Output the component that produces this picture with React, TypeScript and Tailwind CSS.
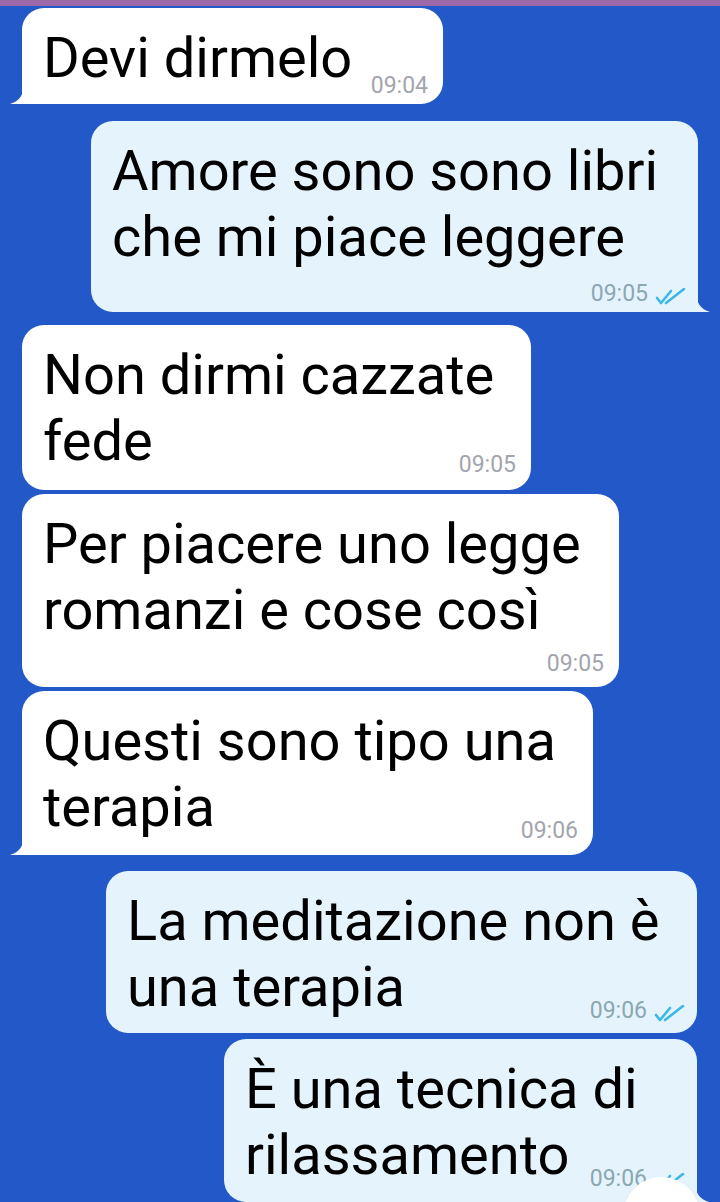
import React from "react";

type BubbleProps = {
  out?: boolean;
  lines: string[];
  time: string;
  tail?: boolean;
  timeRow?: boolean;
  metaClass?: string;
  className?: string;
};

function Checks() {
  return (
    <svg viewBox="0 0 34 17" className="h-[17px] w-[34px]" fill="none" stroke="#3cb8e8" strokeWidth="2.6" strokeLinecap="round" strokeLinejoin="round">
      <path d="M3 10 L7 15 L17 3" />
      <path d="M12 15 L30 1" />
    </svg>
  );
}

function Meta({ out, time }: { out?: boolean; time: string }) {
  return (
    <div className="flex shrink-0 items-end gap-[6px]">
      <span className={"text-[23px] leading-none " + (out ? "text-[#8ba7b3]" : "text-[#a3a5ad]")}>{time}</span>
      {out && <Checks />}
    </div>
  );
}

function Bubble({ out, lines, time, tail, timeRow, metaClass = "mb-[-2px]", className = "" }: BubbleProps) {
  const head = lines.slice(0, -1);
  const last = lines[lines.length - 1];
  const base = out ? "bg-[#e5f4fc] pl-[21px] pr-[10px]" : "bg-white pl-[21px] pr-[15px]";
  const corner = tail ? (out ? "rounded-br-none" : "rounded-bl-none") : "";
  return (
    <div className={`relative rounded-[22px] pt-[17px] text-[56px] leading-[66px] text-black ${base} ${corner} ${className}`}>
      {head.map((l) => (
        <div key={l} className="whitespace-nowrap">{l}</div>
      ))}
      {timeRow ? (
        <>
          <div className="whitespace-nowrap">{last}</div>
          <div className="flex justify-end">
            <Meta out={out} time={time} />
          </div>
        </>
      ) : (
        <div className="flex items-end justify-between">
          <span className="whitespace-nowrap">{last}</span>
          <div className={metaClass}>
            <Meta out={out} time={time} />
          </div>
        </div>
      )}
      {tail && !out && (
        <svg viewBox="0 0 14 20" className="absolute bottom-0 left-[-12px] h-[20px] w-[14px]">
          <path d="M14 0 Q14 16 0 20 L14 20 Z" fill="#ffffff" />
        </svg>
      )}
      {tail && out && (
        <svg viewBox="0 0 14 20" className="absolute bottom-0 right-[-12px] h-[20px] w-[14px]">
          <path d="M0 0 Q0 16 14 20 L0 20 Z" fill="#e5f4fc" />
        </svg>
      )}
    </div>
  );
}

export default function App() {
  return (
    <div className="relative h-[1202px] w-[720px] overflow-hidden bg-[#2258c7]" style={{ fontFamily: "Roboto, 'Noto Sans', sans-serif" }}>
      <div className="h-[6px] bg-[#9d69a9]" />
      <div className="flex flex-col pt-[2px]">
        <Bubble lines={["Devi dirmelo"]} time="09:04" tail metaClass="mb-[-6px]" className="ml-[22px] w-[421px] pb-[13px]" />
        <Bubble out timeRow lines={["Amore sono sono libri", "che mi piace leggere"]} time="09:05" tail className="mt-[17px] mr-[22px] w-[607px] self-end pb-[7px] [&>div:last-of-type]:mt-[12px]" />
        <Bubble lines={["Non dirmi cazzate", "fede"]} time="09:05" className="mt-[13px] ml-[22px] w-[509px] pb-[16px]" />
        <Bubble timeRow lines={["Per piacere uno legge", "romanzi e cose così"]} time="09:05" className="mt-[4px] ml-[22px] w-[597px] pb-[12px] [&>div:last-of-type]:mt-[9px]" />
        <Bubble lines={["Questi sono tipo una", "terapia"]} time="09:06" tail className="mt-[4px] ml-[22px] w-[571px] pb-[15px]" />
        <Bubble out lines={["La meditazione non è", "una terapia"]} time="09:06" className="mt-[16px] mr-[23px] w-[591px] self-end pb-[13px]" />
        <Bubble out lines={["È una tecnica di", "rilassamento"]} time="09:06" tail className="mt-[6px] mr-[23px] w-[473px] self-end pb-[14px]" />
      </div>
      <div className="absolute left-[623px] top-[1177px] h-[77px] w-[77px] rounded-full bg-white shadow-md" />
    </div>
  );
}
